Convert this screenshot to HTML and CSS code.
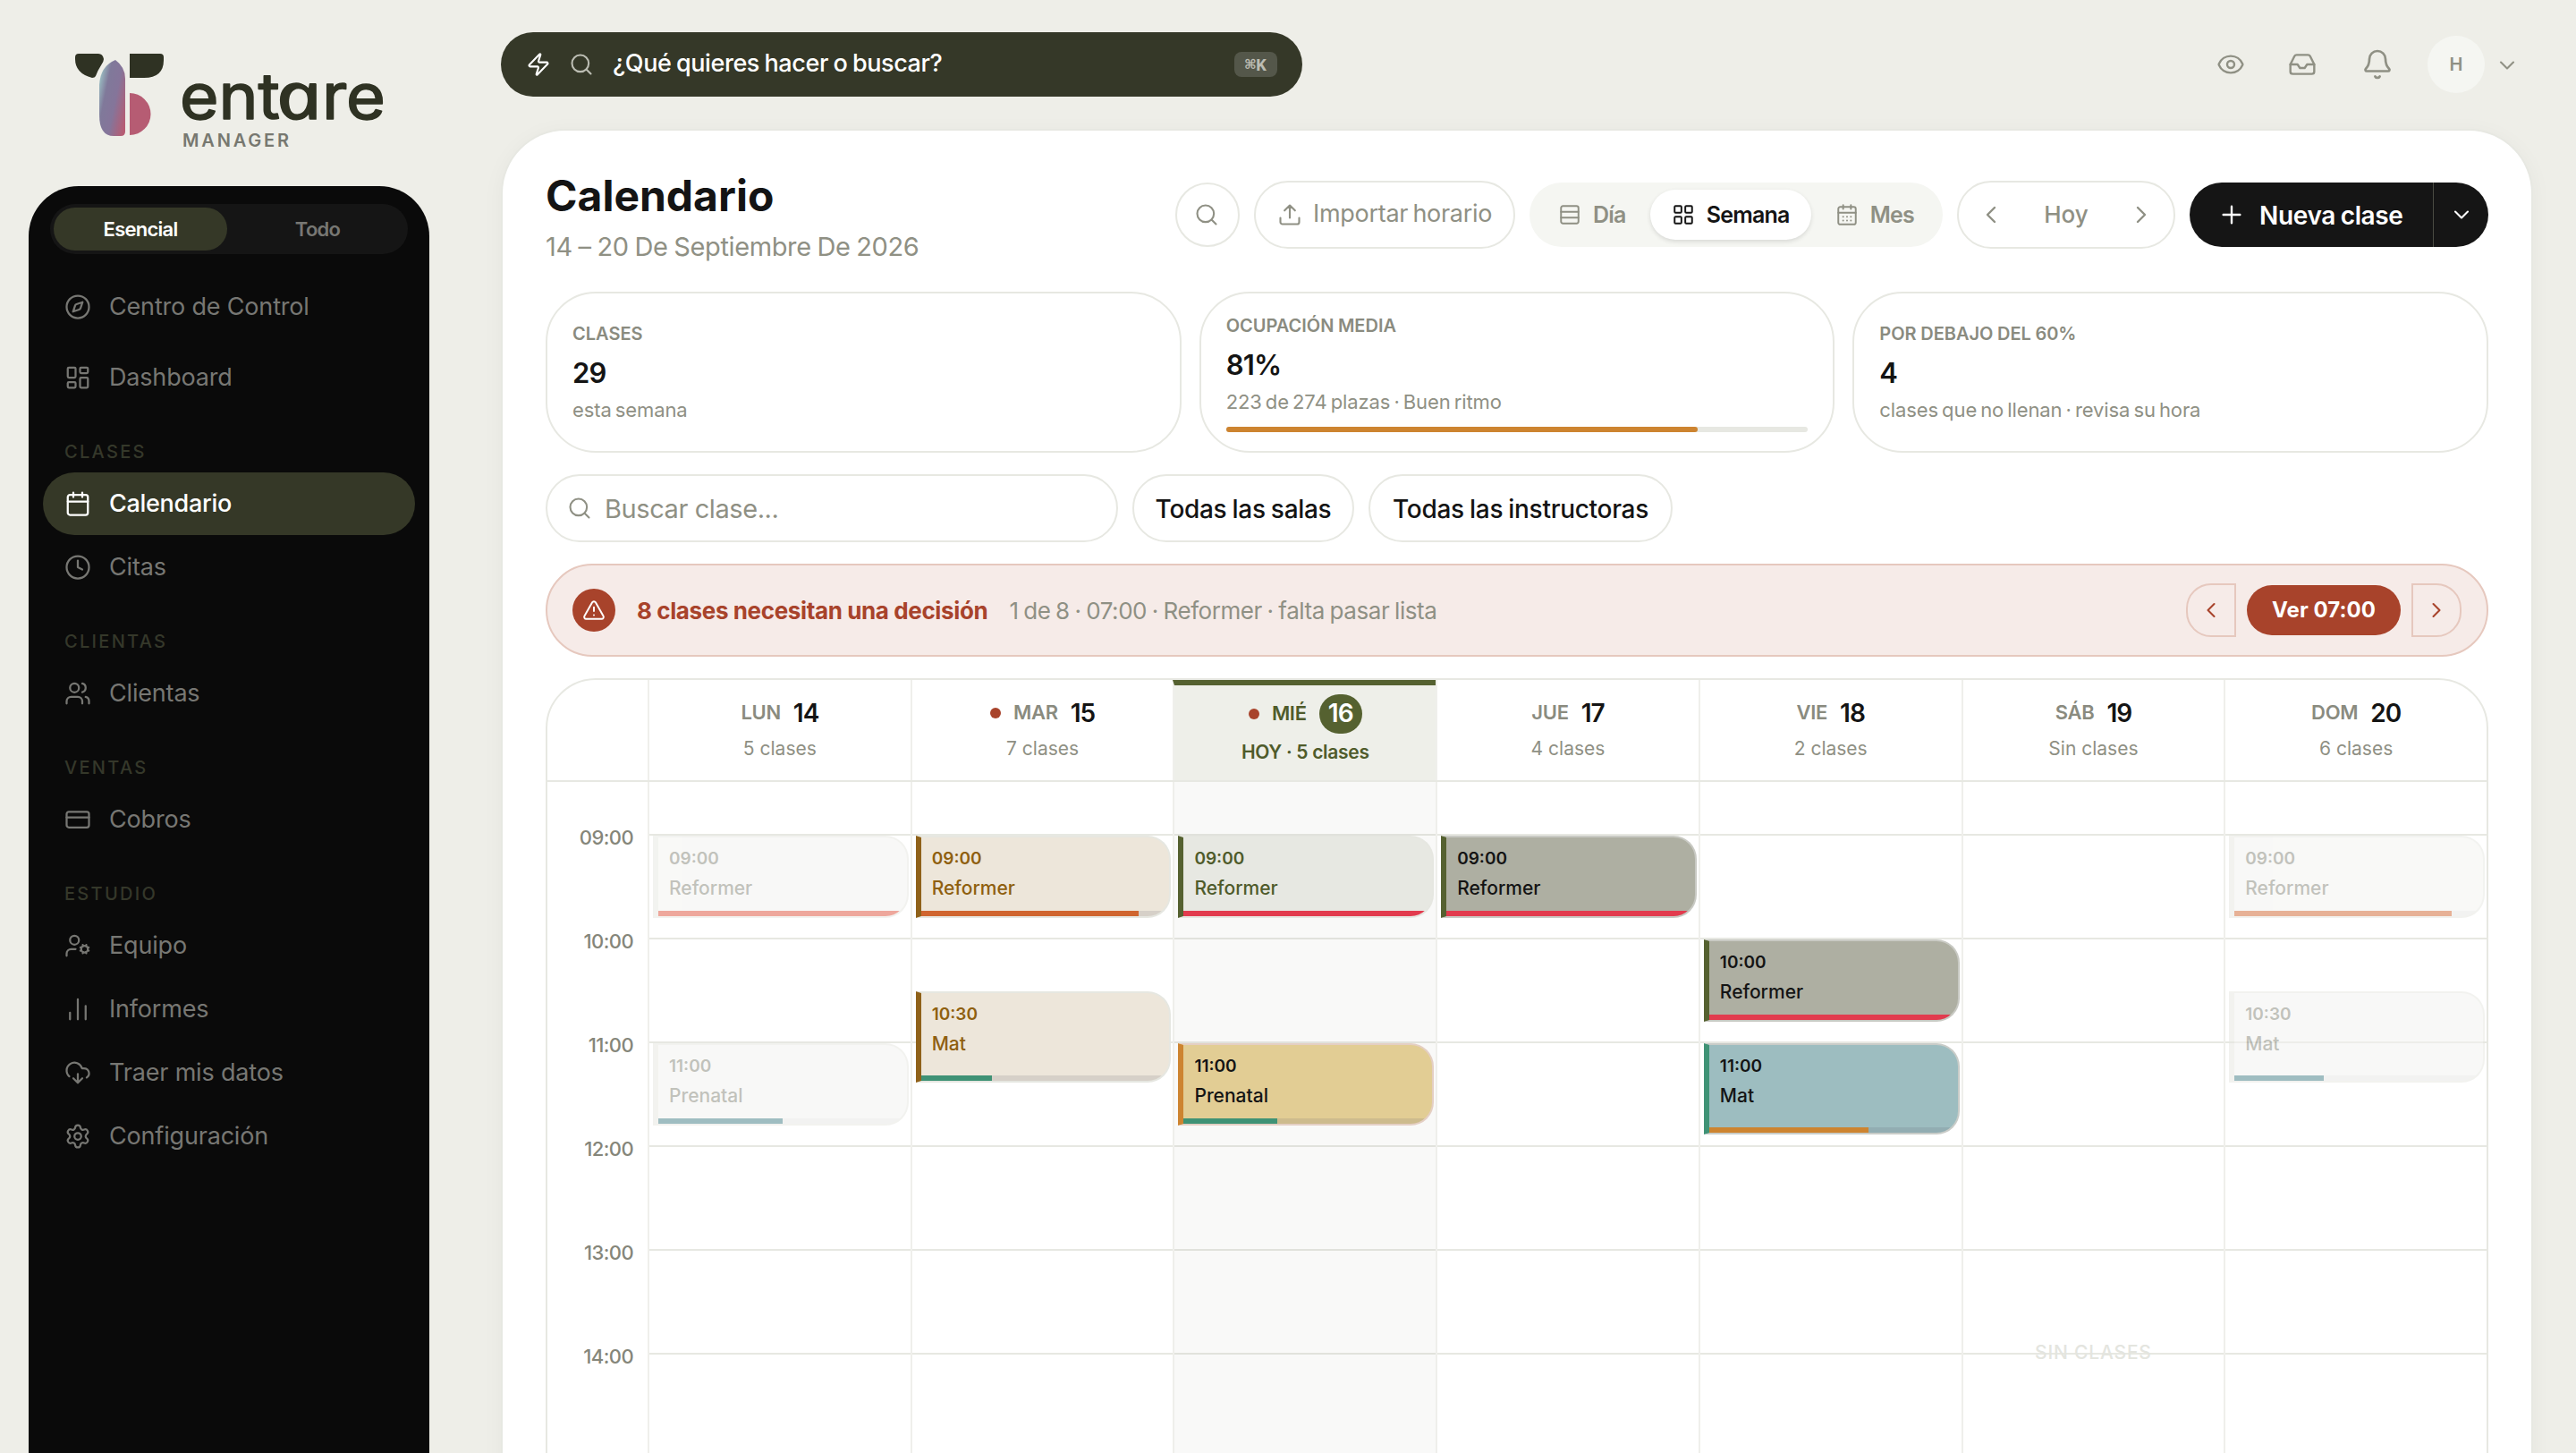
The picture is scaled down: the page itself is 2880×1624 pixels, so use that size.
FILE: index.html
```html
<!DOCTYPE html>
<html lang="es">
<head>
<meta charset="utf-8">
<title>Calendario · Tentare Manager</title>
<link rel="stylesheet" href="styles.css">
</head>
<body>
<svg class="sprite" aria-hidden="true">
  <symbol id="i-search" viewBox="0 0 24 24"><circle cx="11" cy="11" r="8"/><path d="m21 21-4.3-4.3"/></symbol>
  <symbol id="i-zap" viewBox="0 0 24 24"><path d="M4 14a1 1 0 0 1-.78-1.63l9.9-10.2a.5.5 0 0 1 .86.46l-1.92 6.02A1 1 0 0 0 13 10h7a1 1 0 0 1 .78 1.63l-9.9 10.2a.5.5 0 0 1-.86-.46l1.92-6.02A1 1 0 0 0 11 14z"/></symbol>
  <symbol id="i-compass" viewBox="0 0 24 24"><circle cx="12" cy="12" r="10"/><path d="m16.24 7.76-1.8 5.41a2 2 0 0 1-1.27 1.27L7.76 16.24l1.8-5.41a2 2 0 0 1 1.27-1.27z"/></symbol>
  <symbol id="i-dash" viewBox="0 0 24 24"><rect x="3" y="3" width="7" height="9" rx="1"/><rect x="14" y="3" width="7" height="5" rx="1"/><rect x="14" y="12" width="7" height="9" rx="1"/><rect x="3" y="16" width="7" height="5" rx="1"/></symbol>
  <symbol id="i-cal" viewBox="0 0 24 24"><path d="M8 2v4M16 2v4M3 10h18"/><rect x="3" y="4" width="18" height="18" rx="2"/></symbol>
  <symbol id="i-clock" viewBox="0 0 24 24"><circle cx="12" cy="12" r="10"/><path d="M12 6v6l4 2"/></symbol>
  <symbol id="i-users" viewBox="0 0 24 24"><path d="M16 21v-2a4 4 0 0 0-4-4H6a4 4 0 0 0-4 4v2"/><circle cx="9" cy="7" r="4"/><path d="M22 21v-2a4 4 0 0 0-3-3.87M16 3.13a4 4 0 0 1 0 7.75"/></symbol>
  <symbol id="i-card" viewBox="0 0 24 24"><rect x="2" y="5" width="20" height="14" rx="2"/><path d="M2 10h20"/></symbol>
  <symbol id="i-usercog" viewBox="0 0 24 24"><path d="M10 15H6a4 4 0 0 0-4 4v2"/><circle cx="9" cy="7" r="4"/><circle cx="18" cy="15" r="3"/><path d="m14.305 16.53.923-.382M15.228 13.852l-.923-.383M16.852 12.228l-.383-.923M16.852 17.772l-.383.924M19.148 12.228l.383-.923M19.53 18.696l-.382-.924M20.772 13.852l.924-.383M20.772 16.148l.924.383"/></symbol>
  <symbol id="i-bars" viewBox="0 0 24 24"><path d="M5 21v-6M12 21V3M19 21V9"/></symbol>
  <symbol id="i-cloud" viewBox="0 0 24 24"><path d="M12 13v8l-4-4M12 21l4-4"/><path d="M4.393 15.269A7 7 0 1 1 15.71 8h1.79a4.5 4.5 0 0 1 2.436 8.284"/></symbol>
  <symbol id="i-gear" viewBox="0 0 24 24"><path d="M9.671 4.136a2.34 2.34 0 0 1 4.659 0 2.34 2.34 0 0 0 3.319 1.915 2.34 2.34 0 0 1 2.33 4.033 2.34 2.34 0 0 0 0 3.831 2.34 2.34 0 0 1-2.33 4.033 2.34 2.34 0 0 0-3.319 1.915 2.34 2.34 0 0 1-4.659 0 2.34 2.34 0 0 0-3.32-1.915 2.34 2.34 0 0 1-2.33-4.033 2.34 2.34 0 0 0 0-3.831A2.34 2.34 0 0 1 6.35 6.051a2.34 2.34 0 0 0 3.319-1.915"/><circle cx="12" cy="12" r="3"/></symbol>
  <symbol id="i-eye" viewBox="0 0 24 24"><path d="M2.062 12.348a1 1 0 0 1 0-.696 10.75 10.75 0 0 1 19.876 0 1 1 0 0 1 0 .696 10.75 10.75 0 0 1-19.876 0"/><circle cx="12" cy="12" r="3"/></symbol>
  <symbol id="i-inbox" viewBox="0 0 24 24"><path d="M22 12h-6l-2 3h-4l-2-3H2"/><path d="M5.45 5.11 2 12v6a2 2 0 0 0 2 2h16a2 2 0 0 0 2-2v-6l-3.45-6.89A2 2 0 0 0 16.76 4H7.24a2 2 0 0 0-1.79 1.11z"/></symbol>
  <symbol id="i-bell" viewBox="0 0 24 24"><path d="M10.268 21a2 2 0 0 0 3.464 0"/><path d="M3.262 15.326A1 1 0 0 0 4 17h16a1 1 0 0 0 .74-1.673C19.41 13.956 18 12.499 18 8A6 6 0 0 0 6 8c0 4.499-1.411 5.956-2.738 7.326"/></symbol>
  <symbol id="i-down" viewBox="0 0 24 24"><path d="m6 9 6 6 6-6"/></symbol>
  <symbol id="i-left" viewBox="0 0 24 24"><path d="m15 18-6-6 6-6"/></symbol>
  <symbol id="i-right" viewBox="0 0 24 24"><path d="m9 18 6-6-6-6"/></symbol>
  <symbol id="i-upload" viewBox="0 0 24 24"><path d="M12 15V3M7 8l5-5 5 5M21 15v4a2 2 0 0 1-2 2H5a2 2 0 0 1-2-2v-4"/></symbol>
  <symbol id="i-rows" viewBox="0 0 24 24"><rect x="3" y="3" width="18" height="18" rx="2"/><path d="M3 9h18M3 15h18"/></symbol>
  <symbol id="i-grid" viewBox="0 0 24 24"><rect x="3" y="3" width="7" height="7" rx="1"/><rect x="14" y="3" width="7" height="7" rx="1"/><rect x="14" y="14" width="7" height="7" rx="1"/><rect x="3" y="14" width="7" height="7" rx="1"/></symbol>
  <symbol id="i-days" viewBox="0 0 24 24"><path d="M8 2v4M16 2v4M3 10h18M8 14h.01M12 14h.01M16 14h.01M8 18h.01M12 18h.01M16 18h.01"/><rect x="3" y="4" width="18" height="18" rx="2"/></symbol>
  <symbol id="i-plus" viewBox="0 0 24 24"><path d="M5 12h14M12 5v14"/></symbol>
  <symbol id="i-warn" viewBox="0 0 24 24"><path d="m21.73 18-8-14a2 2 0 0 0-3.48 0l-8 14A2 2 0 0 0 4 21h16a2 2 0 0 0 1.73-3M12 9v4M12 17h.01"/></symbol>
</svg>

<div class="app">
  <aside class="side">
    <svg class="logo" viewBox="0 0 448 208">
      <defs>
        <linearGradient id="body" x1="0" y1=".2" x2="1" y2=".8">
          <stop offset="0" stop-color="#9dc4c6"/><stop offset=".28" stop-color="#80799a"/><stop offset=".6" stop-color="#85759a"/><stop offset="1" stop-color="#b65c73"/>
        </linearGradient>
      </defs>
      <path fill="#2f3223" d="M56 60H78Q83 60 84 66Q84 69 81 73Q77 79 75 85Q74 87 71 87Q52 82 52 66V64Q52 60 56 60Z"/>
      <path fill="#2f3223" d="M113 60H147Q151 60 151 64V67Q151 87 129 87H113Z"/>
      <path fill="url(#body)" d="M97 67Q108 75 108 88V147Q108 152 103 152H95Q79 152 79 128V95Q80 74 97 67Z"/>
      <path fill="#b65c73" d="M113 104A23.500 23.500 0 0 1 113 151Z"/>
      <text class="logo-name" x="169" y="133" textLength="112" lengthAdjust="spacingAndGlyphs">ent</text>
      <text class="logo-name round-a" transform="translate(282 133) scale(1.22 1) skewX(12)">a</text>
      <text class="logo-name" x="328" y="133" textLength="71" lengthAdjust="spacingAndGlyphs">re</text>
      <text class="logo-sub" x="172" y="164" textLength="119">MANAGER</text>
    </svg>
    <nav class="nav">
      <div class="mode"><span class="mode-btn on">Esencial</span><span class="mode-btn">Todo</span></div>
      <div class="group spaced">
        <a class="item"><svg class="ic"><use href="#i-compass"/></svg>Centro de Control</a>
        <a class="item"><svg class="ic"><use href="#i-dash"/></svg>Dashboard</a>
      </div>
      <h3 class="head">CLASES</h3>
      <div class="group">
        <a class="item on"><svg class="ic"><use href="#i-cal"/></svg>Calendario</a>
        <a class="item"><svg class="ic"><use href="#i-clock"/></svg>Citas</a>
      </div>
      <h3 class="head">CLIENTAS</h3>
      <div class="group"><a class="item"><svg class="ic"><use href="#i-users"/></svg>Clientas</a></div>
      <h3 class="head">VENTAS</h3>
      <div class="group"><a class="item"><svg class="ic"><use href="#i-card"/></svg>Cobros</a></div>
      <h3 class="head">ESTUDIO</h3>
      <div class="group">
        <a class="item"><svg class="ic"><use href="#i-usercog"/></svg>Equipo</a>
        <a class="item"><svg class="ic"><use href="#i-bars"/></svg>Informes</a>
        <a class="item"><svg class="ic"><use href="#i-cloud"/></svg>Traer mis datos</a>
        <a class="item"><svg class="ic"><use href="#i-gear"/></svg>Configuración</a>
      </div>
    </nav>
  </aside>

  <div class="main">
    <header class="top">
      <div class="omni">
        <svg class="ic s28"><use href="#i-zap"/></svg>
        <svg class="ic s28 dim"><use href="#i-search"/></svg>
        <span class="omni-text">¿Qué quieres hacer o buscar?</span>
        <kbd class="kbd">⌘K</kbd>
      </div>
      <div class="tools">
        <svg class="ic s32"><use href="#i-eye"/></svg>
        <svg class="ic s32 inbox"><use href="#i-inbox"/></svg>
        <svg class="ic s36"><use href="#i-bell"/></svg>
        <span class="avatar">H</span>
        <svg class="ic s28 down"><use href="#i-down"/></svg>
      </div>
    </header>

    <main class="panel">
      <div class="title-row">
        <div class="titles">
          <h1 class="title">Calendario</h1>
          <p class="range">14 – 20 De Septiembre De 2026</p>
        </div>
        <div class="actions">
          <span class="round"><svg class="ic s28"><use href="#i-search"/></svg></span>
          <span class="outline import"><svg class="ic s28"><use href="#i-upload"/></svg><span class="import-text">Importar horario</span></span>
          <div class="views">
            <span class="view"><svg class="ic s26"><use href="#i-rows"/></svg>Día</span>
            <span class="view on"><svg class="ic s26"><use href="#i-grid"/></svg>Semana</span>
            <span class="view"><svg class="ic s26"><use href="#i-days"/></svg>Mes</span>
          </div>
          <div class="outline pager"><svg class="ic s32"><use href="#i-left"/></svg><span>Hoy</span><svg class="ic s32"><use href="#i-right"/></svg></div>
          <div class="new"><span class="new-main"><svg class="ic s32"><use href="#i-plus"/></svg><span class="new-text">Nueva clase</span></span><span class="new-more"><svg class="ic s28"><use href="#i-down"/></svg></span></div>
        </div>
      </div>

      <section class="stats">
        <div class="stat"><span class="stat-label">CLASES</span><b class="stat-value">29</b><span class="stat-sub">esta semana</span></div>
        <div class="stat"><span class="stat-label">OCUPACIÓN MEDIA</span><b class="stat-value">81%</b><span class="stat-sub">223 de 274 plazas · Buen ritmo</span><div class="meter"><div class="meter-fill" style="width:81%"></div></div></div>
        <div class="stat"><span class="stat-label">POR DEBAJO DEL 60%</span><b class="stat-value">4</b><span class="stat-sub">clases que no llenan · revisa su hora</span></div>
      </section>

      <section class="filters">
        <div class="outline find"><svg class="ic s28"><use href="#i-search"/></svg><span class="find-text">Buscar clase...</span></div>
        <span class="outline chip">Todas las salas</span>
        <span class="outline chip wide">Todas las instructoras</span>
      </section>

      <section class="alert">
        <span class="alert-icon"><svg class="ic s26"><use href="#i-warn"/></svg></span>
        <b class="alert-title">8 clases necesitan una decisión</b>
        <span class="alert-text">1 de 8 · 07:00 · Reformer · falta pasar lista</span>
        <div class="alert-nav">
          <span class="step prev"><svg class="ic s28"><use href="#i-left"/></svg></span>
          <span class="go">Ver 07:00</span>
          <span class="step next"><svg class="ic s28"><use href="#i-right"/></svg></span>
        </div>
      </section>

      <section class="cal">
        <div class="cal-head">
          <div class="corner"></div>
          <div class="day"><div class="day-top"><span class="dow">LUN</span><b class="num">14</b></div><span class="count">5 clases</span></div>
          <div class="day"><div class="day-top"><i class="dot"></i><span class="dow">MAR</span><b class="num">15</b></div><span class="count">7 clases</span></div>
          <div class="day today"><div class="day-top"><i class="dot"></i><span class="dow">MIÉ</span><b class="num">16</b></div><span class="count">HOY · 5 clases</span></div>
          <div class="day"><div class="day-top"><span class="dow">JUE</span><b class="num">17</b></div><span class="count">4 clases</span></div>
          <div class="day"><div class="day-top"><span class="dow">VIE</span><b class="num">18</b></div><span class="count">2 clases</span></div>
          <div class="day"><div class="day-top"><span class="dow">SÁB</span><b class="num">19</b></div><span class="count">Sin clases</span></div>
          <div class="day"><div class="day-top"><span class="dow">DOM</span><b class="num">20</b></div><span class="count">6 clases</span></div>
        </div>
        <div class="cal-body">
          <div class="hours"><span class="hour">09:00</span><span class="hour">10:00</span><span class="hour">11:00</span><span class="hour">12:00</span><span class="hour">13:00</span><span class="hour">14:00</span></div>
          <div class="col">
            <div class="ev past at9"><span class="ev-time">09:00</span><span class="ev-name">Reformer</span><div class="fill"><div class="fill-in full" style="width:100%"></div></div></div>
            <div class="ev past at11"><span class="ev-time">11:00</span><span class="ev-name">Prenatal</span><div class="fill"><div class="fill-in low" style="width:50%"></div></div></div>
          </div>
          <div class="col">
            <div class="ev pending at9"><span class="ev-time">09:00</span><span class="ev-name">Reformer</span><div class="fill"><div class="fill-in high" style="width:87.5%"></div></div></div>
            <div class="ev pending at1030 long"><span class="ev-time">10:30</span><span class="ev-name">Mat</span><div class="fill"><div class="fill-in low" style="width:28.6%"></div></div></div>
          </div>
          <div class="col now">
            <div class="ev live at9"><span class="ev-time">09:00</span><span class="ev-name">Reformer</span><div class="fill"><div class="fill-in full" style="width:100%"></div></div></div>
            <div class="ev amber at11"><span class="ev-time">11:00</span><span class="ev-name">Prenatal</span><div class="fill"><div class="fill-in low" style="width:37.5%"></div></div></div>
          </div>
          <div class="col">
            <div class="ev olive at9"><span class="ev-time">09:00</span><span class="ev-name">Reformer</span><div class="fill"><div class="fill-in full" style="width:100%"></div></div></div>
          </div>
          <div class="col">
            <div class="ev olive at10"><span class="ev-time">10:00</span><span class="ev-name">Reformer</span><div class="fill"><div class="fill-in full" style="width:100%"></div></div></div>
            <div class="ev teal at11 long"><span class="ev-time">11:00</span><span class="ev-name">Mat</span><div class="fill"><div class="fill-in mid" style="width:64%"></div></div></div>
          </div>
          <div class="col"><span class="empty">SIN CLASES</span></div>
          <div class="col">
            <div class="ev past at9"><span class="ev-time">09:00</span><span class="ev-name">Reformer</span><div class="fill"><div class="fill-in high" style="width:87.5%"></div></div></div>
            <div class="ev past at1030 long"><span class="ev-time">10:30</span><span class="ev-name">Mat</span><div class="fill"><div class="fill-in low" style="width:36%"></div></div></div>
          </div>
        </div>
      </section>
    </main>
  </div>
</div>
</body>
</html>
```
FILE: styles.css
```css
* { box-sizing: border-box; }
html, body { height: 100%; }
body {
  margin: 0;
  overflow: hidden;
  background: #eeeee8;
  color: #141414;
  font-family: Inter, "Liberation Sans", sans-serif;
  font-size: 26px;
  line-height: 1.2;
}
h1, h3, p { margin: 0; }
.sprite { position: absolute; width: 0; height: 0; }
.ic { width: 30px; height: 30px; flex: none; fill: none; stroke: currentColor; stroke-width: 1.8; stroke-linecap: round; stroke-linejoin: round; }
.s26 { width: 26px; height: 26px; }
.s28 { width: 28px; height: 28px; }
.s32 { width: 32px; height: 32px; }
.s36 { width: 36px; height: 36px; }

.app { display: flex; height: 1624px; }

/* Sidebar */
.side { width: 480px; padding-left: 32px; display: flex; flex-direction: column; flex: none; }
.logo { width: 448px; height: 208px; flex: none; }
.logo-name { font-family: Inter, sans-serif; font-size: 71px; font-weight: 400; fill: #2f3223; stroke: #2f3223; stroke-width: 1.6; stroke-linejoin: round; }
.round-a { font-family: "Noto Sans", sans-serif; font-style: italic; font-size: 73px; }
.logo-sub { font-size: 20px; font-weight: 600; fill: #777870; }
.nav { flex: 1; background: #0a0a0a; border-radius: 56px 56px 0 0; padding: 20px 16px; color: #777773; }
.mode { display: flex; gap: 4px; height: 56px; margin: 0 8px; padding: 4px; border-radius: 28px; background: #151515; }
.mode-btn { flex: 1; display: flex; align-items: center; justify-content: center; border-radius: 24px; font-size: 22px; font-weight: 600; letter-spacing: -.75px; }
.mode-btn.on { background: #353827; color: #fff; }
.group { display: flex; flex-direction: column; gap: 1px; }
.spaced { margin-top: 24px; gap: 9px; }
.item { display: flex; align-items: center; gap: 20px; height: 70px; padding: 0 24px; border-radius: 35px; font-size: 27px; letter-spacing: -.18px; }
.item.on { background: #353827; color: #fff; font-weight: 500; letter-spacing: -.3px; }
.head { height: 26px; margin: 34.5px 0 10.5px; padding-left: 24px; color: #35382a; font-size: 20px; font-weight: 500; line-height: 26px; letter-spacing: 2.3px; }

/* Top bar */
.main { flex: 1; display: flex; flex-direction: column; padding: 36px 48px 0 80px; min-width: 0; }
.top { display: flex; justify-content: space-between; height: 72px; margin-bottom: 36px; flex: none; }
.omni { display: flex; align-items: center; width: 896px; padding: 0 28px; border-radius: 36px; background: #353828; color: #fff; }
.dim { color: #bcbdb3; margin-left: 20px; }
.omni-text { margin: -2px 0 0 21px; font-size: 27px; font-weight: 500; letter-spacing: -.42px; word-spacing: -1.2px; }
.kbd { display: flex; align-items: center; justify-content: center; width: 48px; height: 28px; margin-left: auto; border-radius: 8px; background: #54574a; color: #bcbdb3; font: 700 20px "Liberation Mono", monospace; }
.tools { display: flex; align-items: center; color: #8f9084; padding-right: 15px; }
.inbox { margin: 0 50px 0 48px; }
.avatar { display: flex; align-items: center; justify-content: center; width: 64px; height: 64px; margin-left: 38px; border-radius: 50%; background: #f5f6f2; font-size: 20px; font-weight: 600; }
.down { margin: 2px 0 0 11px; }

/* Panel */
.panel { flex: 1; padding: 44px 48px 0; border: 2px solid #e7e8e2; border-bottom: 0; border-radius: 72px 72px 0 0; background: #fff; box-shadow: 0 4px 24px rgba(60, 62, 40, .04); }
.title-row { display: flex; justify-content: space-between; height: 136px; }
.title { height: 58px; font-size: 48px; font-weight: 700; line-height: 57px; letter-spacing: 0; }
.range { margin-top: 10px; color: #8f9084; font-size: 29px; line-height: 36px; letter-spacing: -.38px; word-spacing: -1px; }
.actions { display: flex; align-items: center; gap: 16px; height: 76px; margin-top: 12px; color: #8f9084; }
.outline { display: flex; align-items: center; height: 76px; border: 2px solid #e7e8e2; border-radius: 38px; }
.round { display: flex; align-items: center; justify-content: center; width: 72px; height: 72px; padding-right: 2px; border: 2px solid #e7e8e2; border-radius: 50%; }
.import { width: 292px; padding-left: 24px; gap: 12px; font-size: 27px; }
.import-text { margin-top: -2px; letter-spacing: -.3px; word-spacing: -2px; white-space: nowrap; }
.views { display: flex; align-items: center; justify-content: space-between; width: 462px; height: 72px; padding: 8px; border-radius: 36px; background: #f5f6f2; }
.view { display: flex; align-items: center; gap: 13px; height: 56px; padding: 0 24px; border-radius: 28px; font-size: 25px; font-weight: 600; letter-spacing: -.8px; }
.view.on { background: #fff; color: #141414; box-shadow: 0 2px 5px rgba(0, 0, 0, .12); }
.pager { justify-content: space-between; width: 244px; padding: 0 20px; font-size: 26px; font-weight: 500; }
.new { display: flex; width: 334px; height: 72px; border-radius: 36px; background: #151515; color: #fff; overflow: hidden; }
.new-main { display: flex; align-items: center; width: 273px; padding-left: 31px; gap: 15px; border-right: 1px solid #4a4b42; }
.new-text { margin-top: 3px; font-size: 28px; font-weight: 600; letter-spacing: -.35px; word-spacing: -1px; white-space: nowrap; }
.new-more { flex: 1; display: flex; align-items: center; justify-content: center; }

.stats { display: grid; grid-template-columns: repeat(3, 1fr); gap: 20px; }
.stat { display: flex; flex-direction: column; justify-content: center; height: 180px; padding: 0 28px; border: 2px solid #e7e8e2; border-radius: 56px; }
.stat-label { color: #8a8b7f; font-size: 20px; font-weight: 600; line-height: 28px; letter-spacing: 0; word-spacing: -.5px; }
.stat-value { margin-top: 8px; font-size: 31px; font-weight: 600; line-height: 44px; letter-spacing: -.8px; }
.stat-sub { margin-top: 4px; color: #8f9084; font-size: 22px; line-height: 30px; letter-spacing: -.1px; word-spacing: -2px; }
.meter { height: 6px; margin-top: 13px; border-radius: 3px; background: #e7e8e2; }
.meter-fill { height: 6px; border-radius: 3px; background: #cd8430; }

.filters { display: flex; gap: 16px; margin-top: 24px; }
.find { width: 640px; padding-left: 22px; gap: 14px; color: #8f9084; font-size: 29px; letter-spacing: -.42px; }
.find-text { margin-top: 3px; }
.chip { justify-content: center; width: 248px; padding-top: 3px; font-size: 28px; font-weight: 500; letter-spacing: -.3px; word-spacing: -1px; white-space: nowrap; }
.chip.wide { width: 340px; }

.alert { display: flex; align-items: center; height: 104px; margin-top: 24px; padding: 0 28px; border: 2px solid #e6c8be; border-radius: 52px; background: #f6ebe8; }
.alert-icon { display: flex; align-items: center; justify-content: center; width: 48px; height: 48px; border-radius: 50%; background: #a8432b; color: #fff; }
.alert-title { margin: 1px 0 0 24px; color: #a8432b; font-size: 26px; font-weight: 700; letter-spacing: -.35px; word-spacing: -.2px; white-space: nowrap; }
.alert-text { margin: 1px 0 0 24px; color: #8f9084; font-size: 26px; letter-spacing: -.43px; word-spacing: -1.2px; white-space: nowrap; }
.alert-nav { display: flex; align-items: center; gap: 12px; margin-left: auto; }
.step { display: flex; align-items: center; justify-content: center; width: 56px; height: 60px; border: 2px solid #e6c8be; color: #a8432b; }
.prev { border-radius: 28px 0 0 28px; }
.next { border-radius: 0 28px 28px 0; }
.go { display: flex; align-items: center; justify-content: center; width: 172px; height: 56px; border-radius: 28px; background: #a8432b; color: #fff; font-size: 24px; font-weight: 700; letter-spacing: .05px; }

/* Week grid */
.cal { margin-top: 24px; height: 900px; border: 2px solid #e7e8e2; border-radius: 56px 56px 0 0; overflow: hidden; }
.cal-head, .cal-body { display: grid; grid-template-columns: 112px repeat(7, 1fr); }
.cal-head { height: 114px; border-bottom: 2px solid #e7e8e2; }
.day { display: flex; flex-direction: column; align-items: center; padding-top: 15px; border-left: 2px solid #efefeb; }
.day-top { display: flex; align-items: center; gap: 14px; height: 44px; color: #8a8b7f; }
.dow { font-size: 22px; font-weight: 600; margin-top: -2px; letter-spacing: -.3px; }
.num { margin-top: 1px; color: #141414; font-size: 28px; font-weight: 600; letter-spacing: -1px; }
.dot { width: 12px; height: 12px; border-radius: 50%; background: #a8432b; }
.count { margin-top: 4px; color: #8f9084; font-size: 21px; line-height: 28px; }
.today { padding-top: 10px; border-top: 6px solid #556130; background: #eeefe9; }
.today .dow, .today .count { color: #4f5b2b; font-weight: 600; letter-spacing: -.3px; }
.today .count { margin-top: 7px; }
.today .num { display: flex; align-items: center; justify-content: center; width: 48px; height: 44px; margin-top: 0; border-radius: 24px; background: #556130; color: #fff; }
.cal-body { height: 784px; background: linear-gradient(#e7e8e2 0 2px, transparent 2px) 112px 58px / 100% 116px; background-repeat: repeat-y; }
.hours { display: flex; flex-direction: column; padding-top: 2px; background: #fff; }
.hour { height: 116px; padding: 46px 16px 0 0; color: #85867a; font-size: 22px; font-weight: 500; line-height: 28px; text-align: right; letter-spacing: -.6px; }
.col { position: relative; border-left: 2px solid #efefeb; }
.now { background: rgba(85, 97, 48, .035); }
.empty { position: absolute; top: 624px; left: 0; right: 0; color: #e4e5df; font-size: 21px; font-weight: 500; line-height: 28px; letter-spacing: .8px; text-align: center; }
.ev { position: absolute; left: 4px; right: 2px; display: flex; flex-direction: column; height: 92px; padding: 10px 12px; border: 2px solid #e6e7e1; border-left-width: 6px; border-radius: 0 26px 26px 0; overflow: hidden; }
.long { height: 102px; }
.at9 { top: 60px; }
.at10 { top: 176px; }
.at1030 { top: 234px; }
.at11 { top: 292px; }
.ev-time { font-size: 19px; font-weight: 600; line-height: 28px; }
.ev-name { margin-top: 5px; font-size: 21px; font-weight: 500; line-height: 28px; }
.fill { position: absolute; left: 0; right: 0; bottom: 0; height: 6px; background: rgba(90, 90, 100, .15); }
.fill-in { height: 6px; }
.full { background: #e23b4e; }
.high { background: #d0652f; }
.mid { background: #cd8430; }
.low { background: #3f9275; }
.past { opacity: .5; background: #f3f3f0; border-color: #e6e7e1; color: #85867a; }
.past .fill { background: rgba(90, 90, 80, .07); }
.past .full { background: #de523c; }
.past .low { background: #427e84; }
.pending { background: #ede6da; border-left-color: #8f6119; color: #8f5f0f; }
.live { background: #e7e8e2; border-left-color: #556130; color: #4f5b2b; }
.amber { background: #e2cd94; border-color: #e4cfc4; border-left-color: #cd8430; }
.olive { background: #aeafa2; border-color: #c9cac4; border-left-color: #556130; }
.teal { background: #9dbdc0; border-color: #c9ccc8; border-left-color: #3f9275; }
```
